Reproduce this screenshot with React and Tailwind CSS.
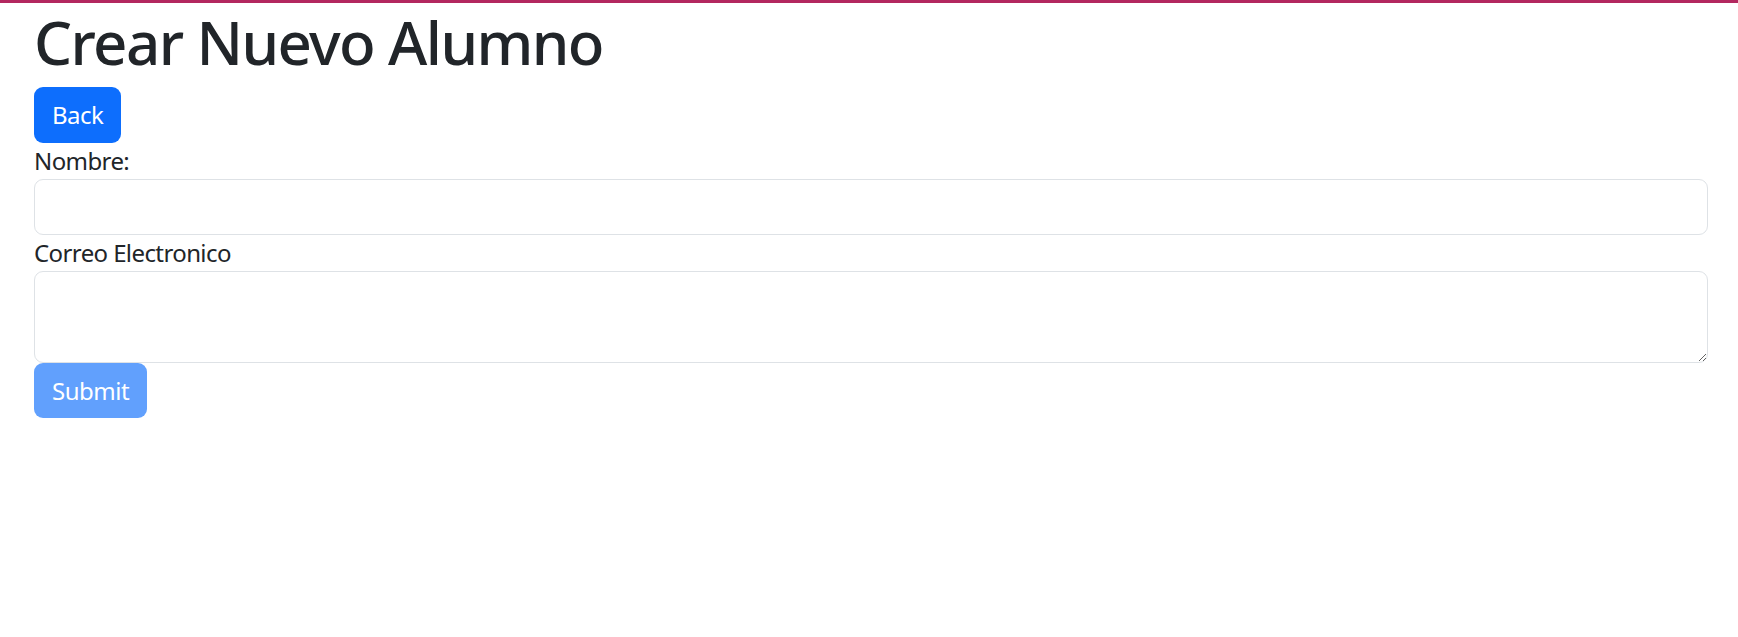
export default function App() {
  return (
    <div
      className="min-h-[637px] w-full bg-white border-t-[3px] border-[#b3285f] text-[#212529]"
      style={{ fontFamily: '"Noto Sans", "Open Sans", sans-serif' }}
    >
      <div className="pl-[34px] pr-[30px]">
        <h1 className="text-[60px] leading-[72px] pt-[3px] font-medium mb-[9px] tracking-[-1.6px]">Crear Nuevo Alumno</h1>
        <button className="h-[56px] px-[18px] rounded-[9px] bg-[#0d6efd] text-white text-[24px] leading-[36px] tracking-[-0.5px]">
          Back
        </button>
        <form>
          <label className="block text-[24px] leading-[36px] tracking-[-0.6px]">Nombre:</label>
          <input
            type="text"
            className="block w-full h-[56px] border border-[#dee2e6] rounded-[9px] px-[18px] text-[24px] outline-none"
          />
          <label className="block text-[24px] leading-[36px] tracking-[-0.6px]">Correo Electronico</label>
          <textarea className="block w-full h-[92px] border border-[#dee2e6] rounded-[9px] px-[18px] text-[24px] outline-none" />
          <button
            type="button"
            className="h-[55px] px-[18px] rounded-[9px] bg-[#0d6efd] opacity-[0.65] text-white text-[24px] leading-[36px] tracking-[-0.5px]"
          >
            Submit
          </button>
        </form>
      </div>
    </div>
  );
}
